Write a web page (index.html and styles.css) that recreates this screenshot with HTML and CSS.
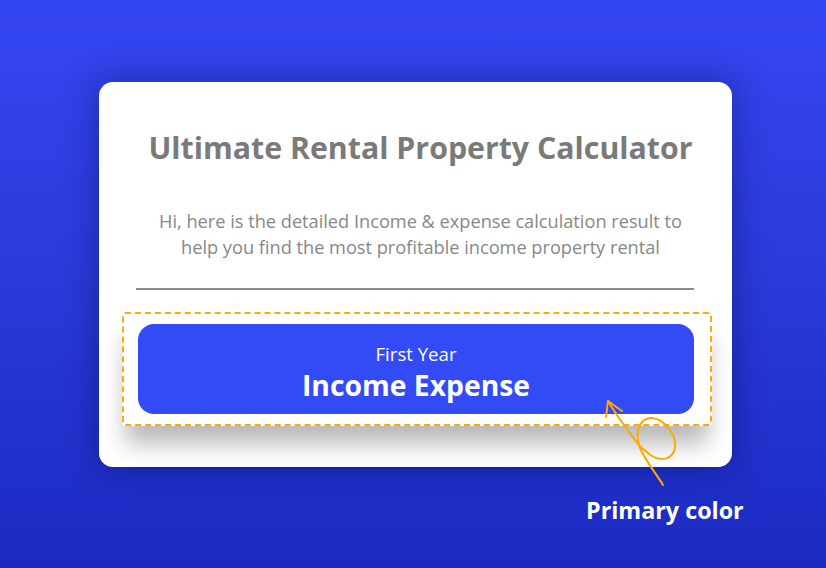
FILE: index.html
```html
<!DOCTYPE html>
<html>
<head>
<meta charset="utf-8">
<link rel="stylesheet" href="styles.css">
</head>
<body>
<main class="stage">
  <section class="card">
    <h1 class="title">Ultimate Rental Property Calculator</h1>
    <p class="intro">Hi, here is the detailed Income &amp; expense calculation result to<br>help you find the most profitable income property rental</p>
    <hr class="divider">
    <div class="highlight">
      <div class="primary-btn">
        <span class="btn-kicker">First Year</span>
        <span class="btn-label">Income Expense</span>
      </div>
    </div>
  </section>
  <div class="note">Primary color</div>
  <svg class="scribble" width="826" height="568" viewBox="0 0 826 568" fill="none" stroke="#ffaa00" stroke-width="2" stroke-linecap="round" stroke-linejoin="round">
    <path d="M663,485 C655,472 645,460 640,448 C636,438 636,420 650,418 C664,417 677,436 675,448 C673,459 661,462 652,456 C646,452 641,447 638,444 C630,433 617,417 608,401"/>
    <path d="M606,417 L608,401 L622,411"/>
  </svg>
</main>
</body>
</html>
```

FILE: styles.css
```css
html, body {
  margin: 0;
  padding: 0;
}
body {
  width: 826px;
  height: 568px;
  overflow: hidden;
  background: linear-gradient(180deg, #3446f2 0%, #2a3ad8 50%, #1a2ac2 100%);
  font-family: "Open Sans", "Noto Sans", sans-serif;
}
.stage {
  position: relative;
  width: 826px;
  height: 568px;
  padding: 82px 0 0 99px;
  box-sizing: border-box;
}
.card {
  width: 633px;
  height: 385px;
  box-sizing: border-box;
  background: #ffffff;
  border-radius: 14px;
  box-shadow: 0 0 34px rgba(5, 10, 80, 0.45);
  padding: 46px 20px 0 23px;
}
.title {
  margin: 0;
  padding-left: 7px;
  font-size: 30.3px;
  line-height: 40px;
  font-weight: 700;
  color: #7a7a7a;
  text-align: center;
  letter-spacing: 0;
  white-space: nowrap;
}
.intro {
  margin: 40px 0 0;
  padding-left: 7px;
  font-size: 18.2px;
  line-height: 26px;
  color: #888888;
  text-align: center;
  white-space: nowrap;
}
.divider {
  margin: 28px 18px 0 14px;
  border: 0;
  height: 2px;
  background: #8c8c8c;
}
.highlight {
  margin-top: 22px;
  height: 114px;
  box-sizing: border-box;
  border: 2px dashed #ffaa00;
  border-radius: 3px;
  background: #ffffff;
  padding: 10px 16px 10px 14px;
  box-shadow: 0 22px 22px -4px rgba(0, 0, 0, 0.28);
}
.primary-btn {
  height: 90px;
  border-radius: 16px;
  background: #334bf5;
  color: #ffffff;
  display: flex;
  flex-direction: column;
  align-items: center;
  justify-content: center;
  padding-top: 8px;
  box-sizing: border-box;
}
.btn-kicker {
  font-size: 18.6px;
  line-height: 24px;
  font-weight: 500;
}
.btn-label {
  font-size: 28.3px;
  line-height: 38px;
  font-weight: 700;
}
.note {
  margin: 28px 0 0 487px;
  font-size: 23.3px;
  line-height: 30px;
  font-weight: 700;
  color: #ffffff;
}
.scribble {
  position: absolute;
  left: 0;
  top: 0;
  pointer-events: none;
}
```
